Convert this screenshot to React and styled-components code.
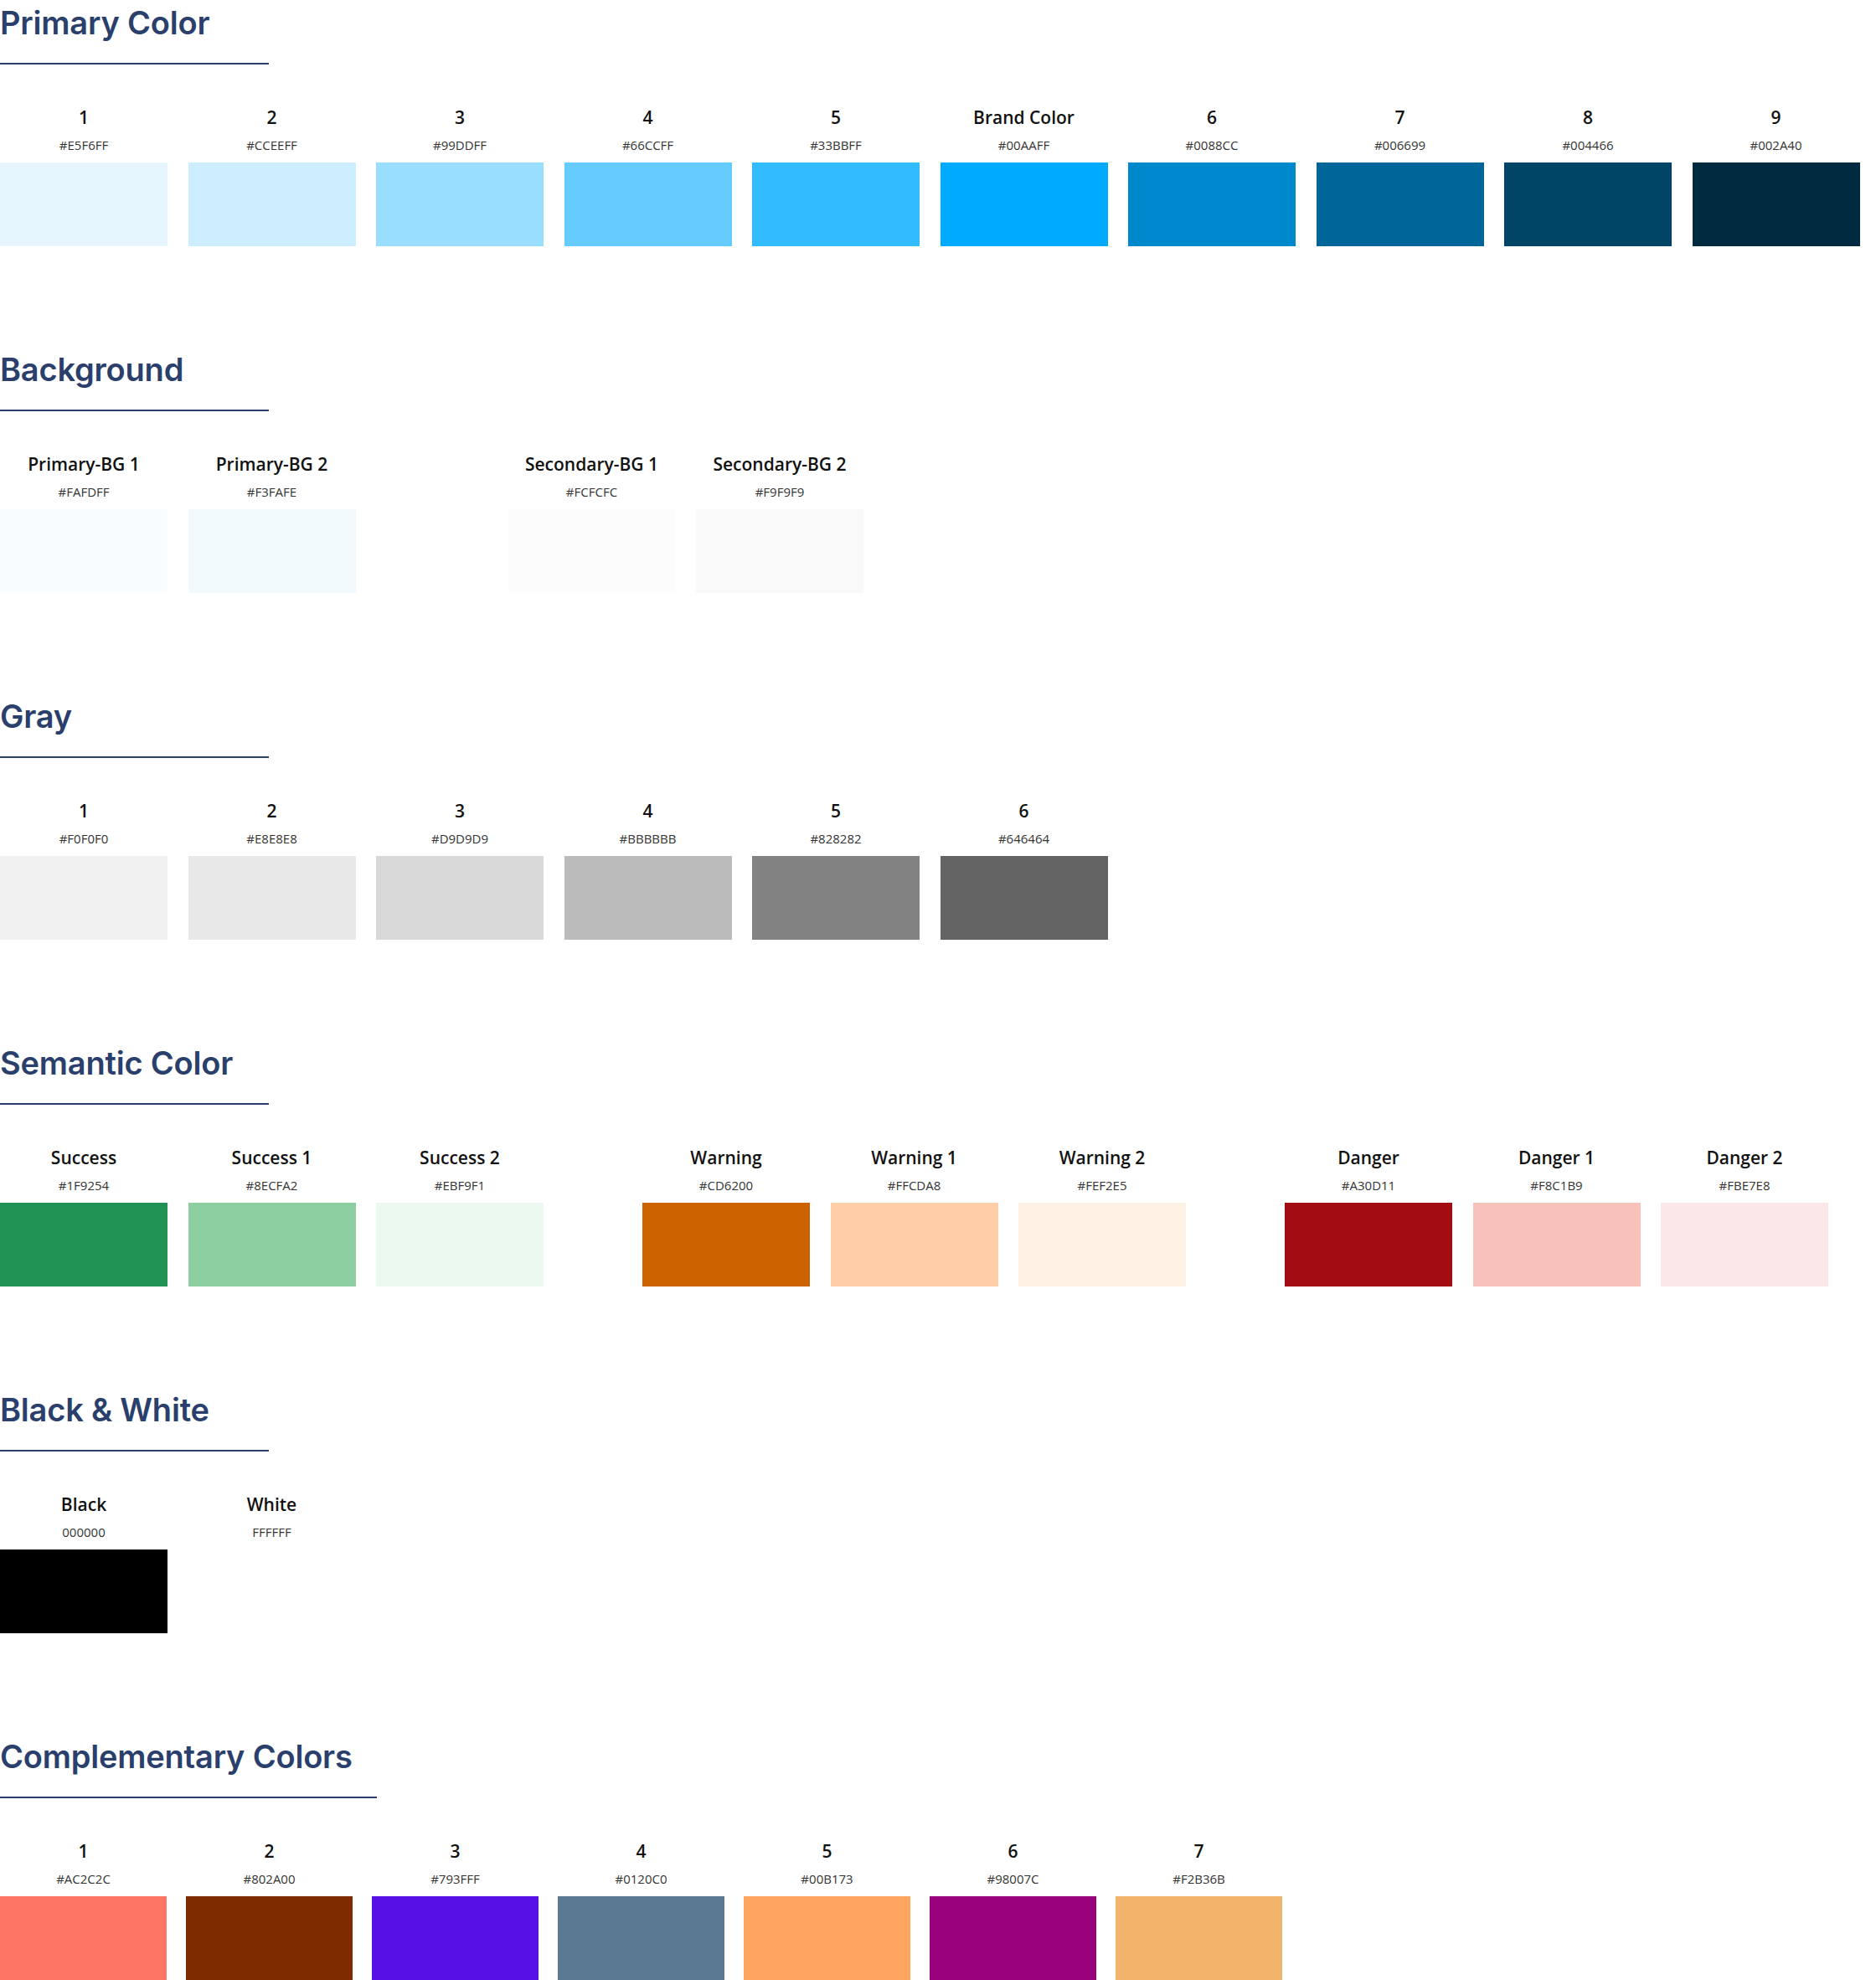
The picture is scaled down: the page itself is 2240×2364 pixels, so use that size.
import React from "react";
import styled, { createGlobalStyle } from "styled-components";

const Global = createGlobalStyle`
  body { margin: 0; background: #fff; font-family: "Open Sans", sans-serif; }
`;

const Page = styled.div`
  display: flex;
  flex-direction: column;
  padding-bottom: 20px;
`;

const Section = styled.section`
  display: flex;
  flex-direction: column;
  margin-bottom: 120px;
  &:last-child { margin-bottom: 0; }
`;

const Title = styled.h2`
  margin: 0;
  font-family: "Inter", sans-serif;
  font-weight: 600;
  font-size: 38px;
  line-height: 54px;
  color: #2a3f6b;
  letter-spacing: -0.2px;
`;

const Rule = styled.div`
  margin-top: 21px;
  width: ${(p) => p.$w}px;
  height: 2px;
  background: #2a3f6b;
`;

const Row = styled.div`
  display: flex;
  margin-top: 49px;
`;

const Group = styled.div`
  display: flex;
  gap: ${(p) => p.$gap}px;
  margin-left: ${(p) => p.$sep}px;
`;

const Swatch = styled.div`
  display: flex;
  flex-direction: column;
  align-items: center;
  width: ${(p) => p.$w}px;
`;

const Label = styled.div`
  font-weight: 600;
  font-size: 21px;
  line-height: 28px;
  color: #111;
  white-space: nowrap;
`;

const Hex = styled.div`
  margin-top: 9px;
  font-size: 15px;
  line-height: 20px;
  color: #333;
`;

const Chip = styled.div`
  margin-top: 11px;
  width: 100%;
  height: 100px;
  background: ${(p) => p.$c};
`;

const sections = [
  {
    title: "Primary Color", rule: 321, w: 200, gap: 24.5, sep: 0,
    groups: [[
      ["1", "#E5F6FF"], ["2", "#CCEEFF"], ["3", "#99DDFF"], ["4", "#66CCFF"], ["5", "#33BBFF"],
      ["Brand Color", "#00AAFF"], ["6", "#0088CC"], ["7", "#006699"], ["8", "#004466"], ["9", "#002A40"],
    ]],
  },
  {
    title: "Background", rule: 321, w: 200, gap: 24.5, sep: 182,
    groups: [
      [["Primary-BG 1", "#FAFDFF"], ["Primary-BG 2", "#F3FAFE"]],
      [["Secondary-BG 1", "#FCFCFC"], ["Secondary-BG 2", "#F9F9F9"]],
    ],
  },
  {
    title: "Gray", rule: 321, w: 200, gap: 24.5, sep: 0,
    groups: [[
      ["1", "#F0F0F0"], ["2", "#E8E8E8"], ["3", "#D9D9D9"], ["4", "#BBBBBB"], ["5", "#828282"], ["6", "#646464"],
    ]],
  },
  {
    title: "Semantic Color", rule: 321, w: 200, gap: 24.5, sep: 118,
    groups: [
      [["Success", "#1F9254"], ["Success 1", "#8ECFA2"], ["Success 2", "#EBF9F1"]],
      [["Warning", "#CD6200"], ["Warning 1", "#FFCDA8"], ["Warning 2", "#FEF2E5"]],
      [["Danger", "#A30D11"], ["Danger 1", "#F8C1B9"], ["Danger 2", "#FBE7E8"]],
    ],
  },
  {
    title: "Black & White", rule: 321, w: 200, gap: 24.5, sep: 0,
    groups: [[["Black", "000000", "#000000"], ["White", "FFFFFF", "#FFFFFF"]]],
  },
  {
    title: "Complementary Colors", rule: 450, w: 199, gap: 23, sep: 0,
    groups: [[
      ["1", "#AC2C2C", "#FF7563"], ["2", "#802A00"], ["3", "#793FFF", "#5511E6"], ["4", "#0120C0", "#5B7891"],
      ["5", "#00B173", "#FFA560"], ["6", "#98007C"], ["7", "#F2B36B"],
    ]],
  },
];

export default function App() {
  return (
    <Page>
      <Global />
      {sections.map((s) => (
        <Section key={s.title}>
          <Title>{s.title}</Title>
          <Rule $w={s.rule} />
          <Row>
            {s.groups.map((g, gi) => (
              <Group key={gi} $gap={s.gap} $sep={gi === 0 ? 0 : s.sep}>
                {g.map(([name, hex, fill]) => (
                  <Swatch key={name} $w={s.w}>
                    <Label>{name}</Label>
                    <Hex>{hex}</Hex>
                    <Chip $c={fill || hex} />
                  </Swatch>
                ))}
              </Group>
            ))}
          </Row>
        </Section>
      ))}
    </Page>
  );
}
